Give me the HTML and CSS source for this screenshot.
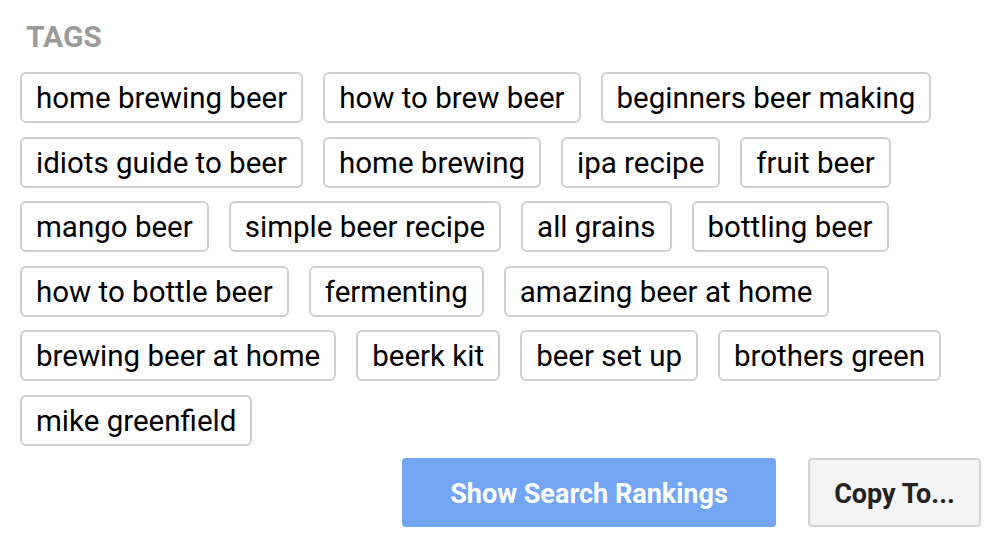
FILE: index.html
```html
<!DOCTYPE html>
<html lang="en">
<head>
  <meta charset="UTF-8">
  <title>Tags</title>
  <link rel="stylesheet" href="styles.css">
</head>
<body>

  <div class="panel">
    <h3 class="section-title">TAGS</h3>

    <div class="tag-list">
      <span class="tag">home brewing beer</span>
      <span class="tag">how to brew beer</span>
      <span class="tag">beginners beer making</span>
      <span class="tag">idiots guide to beer</span>
      <span class="tag">home brewing</span>
      <span class="tag">ipa recipe</span>
      <span class="tag">fruit beer</span>
      <span class="tag">mango beer</span>
      <span class="tag">simple beer recipe</span>
      <span class="tag">all grains</span>
      <span class="tag">bottling beer</span>
      <span class="tag">how to bottle beer</span>
      <span class="tag">fermenting</span>
      <span class="tag">amazing beer at home</span>
      <span class="tag">brewing beer at home</span>
      <span class="tag">beerk kit</span>
      <span class="tag">beer set up</span>
      <span class="tag">brothers green</span>
      <span class="tag">mike greenfield</span>
    </div>

    <div class="actions">
      <button type="button" class="btn btn-primary">Show Search Rankings</button>
      <button type="button" class="btn btn-default">Copy To...</button>
    </div>
  </div>

</body>
</html>
```

FILE: styles.css
```css
body {
  margin: 0;
  font-family: Roboto, "Liberation Sans", Arial, sans-serif;
  background-color: #fff;
  color: #000;
}

.panel {
  padding: 20px 21px 0 20px;
}

.section-title {
  margin: 0 0 18px 6px;
  font-size: 30px;
  font-weight: 700;
  color: #9b9b9b;
  line-height: 34px;
}

.tag-list {
  display: flex;
  flex-wrap: wrap;
  gap: 13.6px 20px;
}

.tag {
  display: inline-block;
  padding: 0 14px;
  height: 47px;
  line-height: 48px;
  font-size: 29.5px;
  border: 2px solid #cfcfcf;
  border-radius: 6px;
}

.actions {
  display: flex;
  justify-content: flex-end;
  gap: 32px;
  margin-top: 12.5px;
}

.btn {
  height: 69px;
  padding-top: 3px;
  font-family: Roboto, "Liberation Sans", Arial, sans-serif;
  font-size: 27px;
  font-weight: 700;
  border-radius: 4px;
  cursor: pointer;
}

.btn-primary {
  width: 374px;
  background-color: #73a5f5;
  color: #fff;
  border: none;
}

.btn-default {
  width: 173px;
  background-color: #f4f4f4;
  color: #222;
  border: 2px solid #d4d4d4;
}
```
